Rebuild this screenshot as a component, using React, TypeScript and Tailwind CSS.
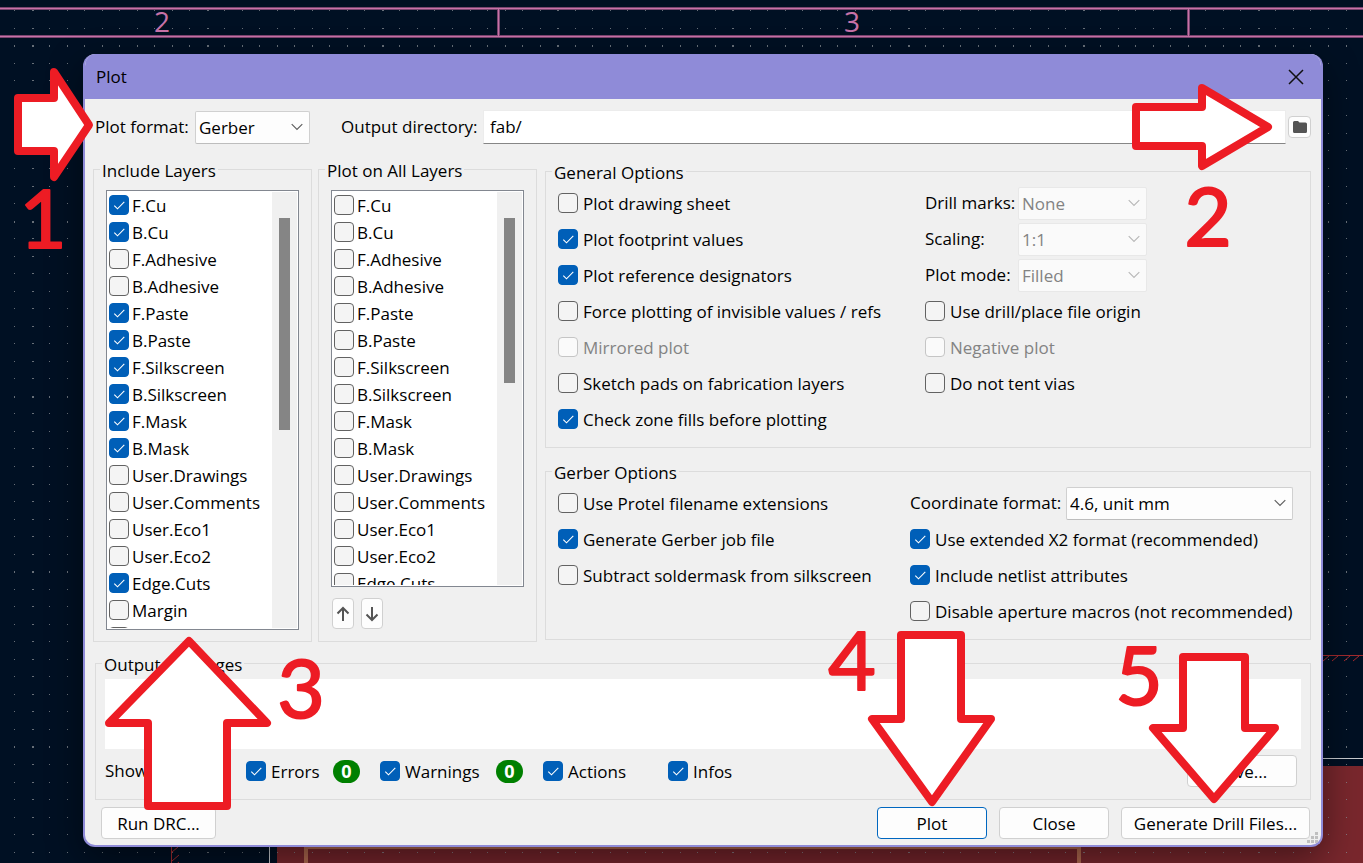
import React, { useState } from 'react';
import clsx from 'clsx';

const layers = [
  'F.Cu',
  'B.Cu',
  'F.Adhesive',
  'B.Adhesive',
  'F.Paste',
  'B.Paste',
  'F.Silkscreen',
  'B.Silkscreen',
  'F.Mask',
  'B.Mask',
  'User.Drawings',
  'User.Comments',
  'User.Eco1',
  'User.Eco2',
  'Edge.Cuts',
  'Margin',
  'F.Courtyard',
];

const includedLayers = [
  'F.Cu',
  'B.Cu',
  'F.Paste',
  'B.Paste',
  'F.Silkscreen',
  'B.Silkscreen',
  'F.Mask',
  'B.Mask',
  'Edge.Cuts',
];

const arrows = [
  '18,98 54,98 54,72 89,125 54,177 54,151 18,151',
  '1136,107 1202,107 1202,88 1268,127 1202,166 1202,146 1136,146',
  '189,641 267,723 227,723 227,806 148,806 148,723 109,723',
  '901,635 961,635 961,719 991,719 932,802 872,719 901,719',
  '1183,657 1245,657 1245,728 1275,728 1214,799 1153,728 1183,728',
];

const steps = [
  { label: '1', x: 43, y: 248 },
  { label: '2', x: 1208, y: 246 },
  { label: '3', x: 301, y: 718 },
  { label: '4', x: 852, y: 690 },
  { label: '5', x: 1139, y: 705 },
];

// Grid dots of the board editor, every tenth row and column is thicker
const gridDots = () => {
  let d = '';
  for (let row = 0; row < 60; row++) {
    for (let col = 0; col < 110; col++) {
      const x = Math.round(14.5 + col * 17.52 - 0.5);
      const y = Math.round(10.2 + row * 17.53);
      const w = col % 10 === 1 ? 2 : 1;
      const h = row % 10 === 2 ? 2 : 1;
      d += `M${x} ${y}h${w}v${h}h-${w}z`;
    }
  }
  return d;
};

const hatchX = [1323, 1332, 1344, 1353];

const BoardCanvas = () => (
  <svg className="absolute inset-0 h-full w-full" shapeRendering="crispEdges" aria-hidden="true">
    <rect x="277" y="766" width="1600" height="600" fill="#79272d" />
    <rect x="307" y="850" width="770" height="400" fill="#74242b" />
    <path d={gridDots()} fill="#8a8f96" fillOpacity="0.75" />
    <g fill="#b0694f">
      <rect x="304" y="847" width="4" height="400" />
      <rect x="1077" y="847" width="4" height="400" />
      <rect x="304" y="847" width="777" height="2" />
    </g>
    <g fill="none" stroke="#7a4570" strokeWidth="3">
      <path d="M0 8.5H2000M0 36.5H2000M498.5 8V37M1188.5 8V37" />
    </g>
    <g fill="none" stroke="#c872a8" strokeWidth="1">
      <path d="M0 8.5H2000M0 36.5H2000M498.5 8V37M1188.5 8V37" />
    </g>
    <g fill="#c872a8" fontFamily="'Open Sans', sans-serif" fontSize="28" textAnchor="middle">
      <text x="162" y="32">2</text>
      <text x="852" y="32">3</text>
    </g>
    <path d="M269.5 847V1200M1320 758.5H2000" stroke="#c9ccd0" fill="none" />
    <g stroke="#a32a2e" fill="none" shapeRendering="auto">
      <path d="M1320 655.5H2000M171.5 847V1200" />
      {hatchX.map(x => (
        <path key={x} d={`M${x} 661l6 -5`} />
      ))}
      <path d="M172 852l6 -5M172 861l7 -6M172 868l7 -6" />
    </g>
  </svg>
);

const Annotations = () => (
  <svg className="pointer-events-none absolute inset-0 h-full w-full" aria-hidden="true">
    <g fill="#ffffff" stroke="#ed1c24" strokeWidth="8" strokeLinejoin="round">
      {arrows.map(points => (
        <polygon key={points} points={points} />
      ))}
    </g>
    <g
      fill="#ed1c24"
      stroke="#ed1c24"
      strokeWidth="2"
      strokeLinejoin="round"
      fontFamily="Lato, sans-serif"
      fontSize="82"
      textAnchor="middle"
    >
      {steps.map(step => (
        <text key={step.label} x={step.x} y={step.y}>
          {step.label}
        </text>
      ))}
    </g>
  </svg>
);

type CheckProps = {
  label: string;
  checked?: boolean;
  disabled?: boolean;
  className?: string;
};

const Check = ({ label, checked = false, disabled = false, className }: CheckProps) => {
  const [on, setOn] = useState(checked);

  return (
    <label className={clsx('flex items-center whitespace-nowrap', disabled && 'text-[#838383]', className)}>
      <span className="grid shrink-0">
        <input
          type="checkbox"
          checked={on}
          disabled={disabled}
          onChange={() => setOn(!on)}
          className="peer col-start-1 row-start-1 size-5 appearance-none rounded border border-[#626262] bg-[#f4f4f4] checked:border-[#005fb8] checked:bg-[#005fb8] disabled:border-[#c5c5c5] disabled:bg-[#fafafa]"
        />
        <svg
          viewBox="0 0 20 20"
          className="pointer-events-none invisible col-start-1 row-start-1 size-5 peer-checked:visible"
          fill="none"
          stroke="#ffffff"
          strokeWidth="1.1"
        >
          <path d="M5.3 10.6l3.2 3.2 6.8-7" />
        </svg>
      </span>
      <span className="pt-0.5">{label}</span>
    </label>
  );
};

type PickerProps = {
  id: string;
  options: string[];
  disabled?: boolean;
  className: string;
};

const Picker = ({ id, options, disabled = false, className }: PickerProps) => (
  <span className={clsx('grid shrink-0', className)}>
    <select
      id={id}
      disabled={disabled}
      className="col-start-1 row-start-1 h-[33px] w-full appearance-none rounded-[2px] border border-[#d0d0d0] border-b-[#bdbdbd] bg-[#fdfdfd] pl-[3px] pt-0.5 disabled:border-[#e8e8e8] disabled:bg-[#fafafa] disabled:text-[#838383] disabled:opacity-100"
    >
      {options.map(option => (
        <option key={option}>{option}</option>
      ))}
    </select>
    <svg
      viewBox="0 0 12 8"
      className={clsx(
        'pointer-events-none col-start-1 row-start-1 mr-[7px] h-2 w-3 self-center justify-self-end',
        disabled ? 'text-[#b9b9b9]' : 'text-[#5f5f5f]'
      )}
      fill="none"
      stroke="currentColor"
      strokeWidth="1.2"
    >
      <path d="M.7 1.2L6 6.5l5.3-5.3" />
    </svg>
  </span>
);

type GroupProps = {
  title: string;
  className?: string;
  bodyClassName: string;
  children: React.ReactNode;
};

const Group = ({ title, className, bodyClassName, children }: GroupProps) => (
  <fieldset className={clsx('min-w-0 border border-[#dcdcdc]', className)}>
    <legend className="ml-1.5 whitespace-nowrap px-0.5 pt-1 leading-6">{title}</legend>
    <div className={bodyClassName}>{children}</div>
  </fieldset>
);

type LayerListProps = {
  checkedLayers: string[];
  className: string;
  thumbClassName: string;
};

const LayerList = ({ checkedLayers, className, thumbClassName }: LayerListProps) => (
  <div className={clsx('flex overflow-hidden border border-[#828790] bg-white p-px', className)}>
    <ul className="flex-1 overflow-hidden pl-px">
      {layers.map(layer => (
        <li key={layer}>
          <Check label={layer} checked={checkedLayers.includes(layer)} className="h-[27px] gap-[3px] pb-px" />
        </li>
      ))}
    </ul>
    <div className="w-[25px] bg-[#f0f0f0] pl-[7px] pt-[26px]">
      <div className={clsx('w-[11px] bg-[#858585]', thumbClassName)} />
    </div>
  </div>
);

const buttonStyle = 'h-8 rounded border bg-[#fdfdfd] pt-0.5 text-center whitespace-nowrap';

const MoveButton = ({ label, path }: { label: string; path: string }) => (
  <button
    type="button"
    aria-label={label}
    className="flex h-[31px] w-[22px] items-center justify-center rounded border border-[#d0d0d0] bg-[#fdfdfd]"
  >
    <svg viewBox="0 0 14 16" className="h-4 w-3.5 shrink-0" fill="none" stroke="#545454" strokeWidth="2">
      <path d={path} />
    </svg>
  </button>
);

const CountBadge = () => (
  <span className="mr-5 flex h-[23px] w-[27px] shrink-0 items-center justify-center rounded-full bg-[#008000] text-lg font-bold text-white">
    0
  </span>
);

const App = () => {
  const [directory, setDirectory] = useState('fab/');

  return (
    <div className="relative min-h-screen overflow-hidden bg-[#001023] pb-4 pl-[83px] pr-10 pt-[54px] font-['Open_Sans',sans-serif] text-[17px] leading-6 text-black">
      <BoardCanvas />

      <main className="relative overflow-hidden rounded-xl border-x-2 border-b-2 border-[#8f8bd8] bg-[#f0f0f0] shadow-[0_12px_36px_rgba(0,0,0,0.45)]">
        <header className="flex h-[45px] items-center justify-between bg-[#8f8bd8] pl-[11px] pr-[17px]">
          <h1>Plot</h1>
          <button type="button" aria-label="Close window">
            <svg viewBox="0 0 16 16" className="size-4" fill="none" stroke="#111111" strokeWidth="1.5">
              <path d="M1 1l14 14M15 1L1 15" />
            </svg>
          </button>
        </header>

        <div className="pb-1.5 pl-2 pr-2.5 pt-[11px]">
          <div className="flex h-[34px] items-center pl-0.5">
            <label htmlFor="plot-format" className="w-[100px] shrink-0 whitespace-nowrap">
              Plot format:
            </label>
            <Picker id="plot-format" options={['Gerber']} className="w-[115px]" />
            <label htmlFor="output-directory" className="ml-[31px] w-[142px] shrink-0 whitespace-nowrap">
              Output directory:
            </label>
            <input
              id="output-directory"
              type="text"
              value={directory}
              onChange={e => setDirectory(e.target.value)}
              className="h-[34px] min-w-0 flex-1 border border-[#ececec] border-b-[#868686] bg-white pb-0.5 pl-1.5"
            />
            <button
              type="button"
              aria-label="Browse"
              className="ml-0.5 flex h-[22px] w-[23px] shrink-0 items-center justify-center rounded border border-[#d0d0d0] bg-[#fdfdfd]"
            >
              <svg viewBox="0 0 14 12" className="h-3 w-3.5 shrink-0" fill="#545454">
                <path d="M0 1.5Q0 0 1.5 0H5l1.5 1.5h6Q14 1.5 14 3v7.500Q14 12 12.500 12h-11Q0 12 0 10.500z" />
              </svg>
            </button>
          </div>

          <div className="mt-[11px] flex items-start">
            <Group title="Include Layers" className="w-[219px] shrink-0" bodyClassName="px-3 pb-[11px] pt-[7px]">
              <LayerList checkedLayers={includedLayers} className="h-[440px]" thumbClassName="h-[212px]" />
            </Group>

            <Group title="Plot on All Layers" className="ml-1.5 w-[219px] shrink-0" bodyClassName="px-3 pb-3 pt-[7px]">
              <LayerList checkedLayers={[]} className="h-[397px]" thumbClassName="h-[165px]" />
              <div className="mt-[11px] flex gap-[7px] pl-px">
                <MoveButton label="Move layer up" path="M7 15V2M1.500 7.500L7 2l5.500 5.500" />
                <MoveButton label="Move layer down" path="M7 1v13M1.500 8.500L7 14l5.500-5.500" />
              </div>
            </Group>

            <div className="ml-2 flex min-w-0 flex-1 flex-col gap-[9px] pt-0.5">
              <Group title="General Options" bodyClassName="flex px-3 pb-2.5">
                <div className="w-[367px] shrink-0">
                  <Check label="Plot drawing sheet" className="h-9 gap-[5px]" />
                  <Check label="Plot footprint values" checked className="h-9 gap-[5px]" />
                  <Check label="Plot reference designators" checked className="h-9 gap-[5px]" />
                  <Check label="Force plotting of invisible values / refs" className="h-9 gap-[5px]" />
                  <Check label="Mirrored plot" disabled className="h-9 gap-[5px]" />
                  <Check label="Sketch pads on fabrication layers" className="h-9 gap-[5px]" />
                  <Check label="Check zone fills before plotting" checked className="h-9 gap-[5px]" />
                </div>
                <div>
                  <div className="flex h-9 items-center">
                    <label htmlFor="drill-marks" className="w-[93px] whitespace-nowrap">
                      Drill marks:
                    </label>
                    <Picker id="drill-marks" options={['None']} disabled className="w-[129px]" />
                  </div>
                  <div className="flex h-9 items-center">
                    <label htmlFor="scaling" className="w-[93px] whitespace-nowrap">
                      Scaling:
                    </label>
                    <Picker id="scaling" options={['1:1']} disabled className="w-[129px]" />
                  </div>
                  <div className="flex h-9 items-center">
                    <label htmlFor="plot-mode" className="w-[93px] whitespace-nowrap">
                      Plot mode:
                    </label>
                    <Picker id="plot-mode" options={['Filled']} disabled className="w-[129px]" />
                  </div>
                  <Check label="Use drill/place file origin" className="h-9 gap-[5px]" />
                  <Check label="Negative plot" disabled className="h-9 gap-[5px]" />
                  <Check label="Do not tent vias" className="h-9 gap-[5px]" />
                </div>
              </Group>

              <Group title="Gerber Options" bodyClassName="flex px-3 pb-2.5">
                <div className="w-[352px] shrink-0">
                  <Check label="Use Protel filename extensions" className="h-9 gap-[5px]" />
                  <Check label="Generate Gerber job file" checked className="h-9 gap-[5px]" />
                  <Check label="Subtract soldermask from silkscreen" className="h-9 gap-[5px]" />
                </div>
                <div>
                  <div className="flex h-9 items-center">
                    <label htmlFor="coordinate-format" className="w-[156px] whitespace-nowrap">
                      Coordinate format:
                    </label>
                    <Picker id="coordinate-format" options={['4.6, unit mm']} className="w-[227px]" />
                  </div>
                  <Check label="Use extended X2 format (recommended)" checked className="h-9 gap-[5px]" />
                  <Check label="Include netlist attributes" checked className="h-9 gap-[5px]" />
                  <Check label="Disable aperture macros (not recommended)" className="h-9 gap-[5px]" />
                </div>
              </Group>
            </div>
          </div>

          <Group title="Output Messages" className="ml-0.5 mt-[7px]" bodyClassName="px-[9px] pb-3 pt-0.5">
            <textarea aria-label="Output Messages" readOnly className="block h-[70px] w-full resize-none bg-white" />
            <div className="mt-1.5 flex h-8 items-center pr-1">
              <span className="w-[141px] shrink-0">Show:</span>
              <Check label="Errors" checked className="w-[87px] shrink-0 gap-[5px]" />
              <CountBadge />
              <Check label="Warnings" checked className="w-[116px] shrink-0 gap-[5px]" />
              <CountBadge />
              <Check label="Actions" checked className="w-[125px] shrink-0 gap-[5px]" />
              <Check label="Infos" checked className="gap-[5px]" />
              <button type="button" className={clsx(buttonStyle, 'ml-auto w-[110px] border-[#d0d0d0]')}>
                Save...
              </button>
            </div>
          </Group>

          <div className="mt-[7px] flex items-center gap-3 pl-2 pr-px">
            <button type="button" className={clsx(buttonStyle, 'mr-auto w-[115px] border-[#d0d0d0]')}>
              Run DRC...
            </button>
            <button type="button" className={clsx(buttonStyle, 'w-[110px] border-[#0067c0]')}>
              Plot
            </button>
            <button type="button" className={clsx(buttonStyle, 'w-[110px] border-[#d0d0d0]')}>
              Close
            </button>
            <button type="button" className={clsx(buttonStyle, 'w-[189px] border-[#d0d0d0]')}>
              Generate Drill Files...
            </button>
          </div>
        </div>

        {/* resize grip */}
        <svg viewBox="0 0 11 11" className="absolute bottom-0.5 right-[3px] size-[11px]" fill="#bfbfbf" aria-hidden="true">
          <path d="M8 0h3v3H8zM8 4h3v3H8zM4 4h3v3H4zM8 8h3v3H8zM4 8h3v3H4zM0 8h3v3H0z" />
        </svg>
      </main>

      <Annotations />
    </div>
  );
};

export default App;
